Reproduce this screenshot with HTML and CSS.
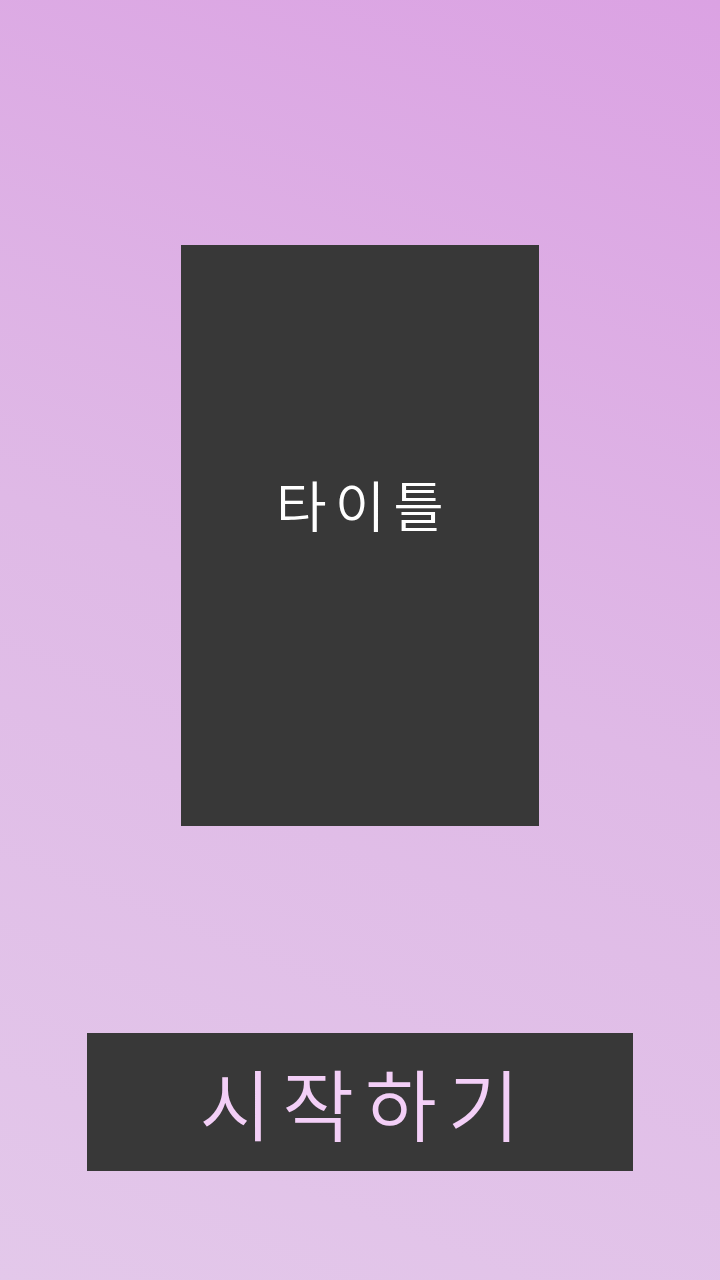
FILE: index.html
```html
<!DOCTYPE html>
<html lang="ko">
<head>
<meta charset="utf-8">
<link rel="stylesheet" href="styles.css">
</head>
<body>
<main class="screen">
  <section class="title-card"><h1 class="title">타이틀</h1></section>
  <button class="start-btn">시작하기</button>
</main>
</body>
</html>
```
FILE: styles.css
```css
html, body { margin: 0; padding: 0; }
body {
  width: 720px;
  height: 1280px;
  overflow: hidden;
  font-family: "Noto Sans CJK KR", "Noto Sans", sans-serif;
}
.screen {
  width: 720px;
  height: 1280px;
  box-sizing: border-box;
  background: linear-gradient(22deg, #e3c8ea 0%, #dfb9e6 50%, #dba2e3 100%);
  display: flex;
  flex-direction: column;
  align-items: center;
  padding-top: 245px;
}
.title-card {
  width: 358px;
  height: 581px;
  background: #383838;
  display: flex;
  align-items: center;
  justify-content: center;
}
.title {
  margin: 0 0 64px 0;
  padding-left: 8px;
  color: #ffffff;
  font-weight: 350;
  font-size: 55px;
  letter-spacing: 8px;
  line-height: 1;
}
.start-btn {
  margin-top: 207px;
  width: 546px;
  height: 138px;
  background: #383838;
  border: none;
  padding: 0 0 0 10px;
  color: #f3cff7;
  font-family: "Noto Sans CJK KR", "Noto Sans", sans-serif;
  font-weight: 350;
  font-size: 78px;
  letter-spacing: 11px;
  line-height: 1;
}
```
